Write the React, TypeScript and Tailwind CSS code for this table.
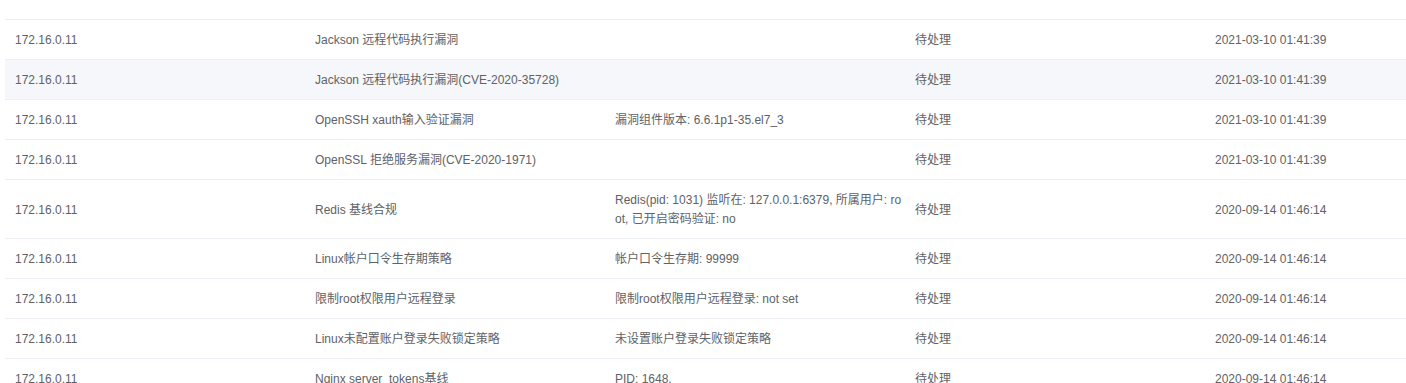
import React from "react";

type Row = {
  ip: string;
  name: string;
  detail: string;
  status: string;
  time: string;
};

const rows: Row[] = [
  { ip: "172.16.0.11", name: "Jackson 远程代码执行漏洞", detail: "", status: "待处理", time: "2021-03-10 01:41:39" },
  { ip: "172.16.0.11", name: "Jackson 远程代码执行漏洞(CVE-2020-35728)", detail: "", status: "待处理", time: "2021-03-10 01:41:39" },
  { ip: "172.16.0.11", name: "OpenSSH xauth输入验证漏洞", detail: "漏洞组件版本: 6.6.1p1-35.el7_3", status: "待处理", time: "2021-03-10 01:41:39" },
  { ip: "172.16.0.11", name: "OpenSSL 拒绝服务漏洞(CVE-2020-1971)", detail: "", status: "待处理", time: "2021-03-10 01:41:39" },
  {
    ip: "172.16.0.11",
    name: "Redis 基线合规",
    detail: "Redis(pid: 1031) 监听在: 127.0.0.1:6379, 所属用户: root, 已开启密码验证: no",
    status: "待处理",
    time: "2020-09-14 01:46:14",
  },
  { ip: "172.16.0.11", name: "Linux帐户口令生存期策略", detail: "帐户口令生存期: 99999", status: "待处理", time: "2020-09-14 01:46:14" },
  { ip: "172.16.0.11", name: "限制root权限用户远程登录", detail: "限制root权限用户远程登录: not set", status: "待处理", time: "2020-09-14 01:46:14" },
  { ip: "172.16.0.11", name: "Linux未配置账户登录失败锁定策略", detail: "未设置账户登录失败锁定策略", status: "待处理", time: "2020-09-14 01:46:14" },
  { ip: "172.16.0.11", name: "Nginx server_tokens基线", detail: "PID: 1648,", status: "待处理", time: "2020-09-14 01:46:14" },
];

function Cell({ children, tight }: { children?: React.ReactNode; tight?: boolean }) {
  return (
    <div
      className={`flex items-center pl-[10px] pt-[11px] pb-[9px] leading-[19px] break-all ${
        tight ? "pr-0" : "pr-[10px]"
      }`}
    >
      <span>{children}</span>
    </div>
  );
}

export default function App() {
  return (
    <div className="h-[383px] overflow-hidden bg-white pl-[5px] text-[12px] text-[#606266] font-['Liberation_Sans','Noto_Sans_CJK_SC',sans-serif]">
      {/* header is scrolled away, only its bottom line shows */}
      <div className="h-[20px] border-b border-[#ebeef5]" />
      {rows.map((r, i) => (
        <div
          key={i}
          className={`grid grid-cols-[300px_300px_300px_300px_1fr] border-b border-[#ebeef5] ${
            i === 1 ? "bg-[#f5f7fa]" : "bg-white"
          }`}
        >
          <Cell>{r.ip}</Cell>
          <Cell>{r.name}</Cell>
          <Cell tight>{r.detail}</Cell>
          <Cell>{r.status}</Cell>
          <Cell>{r.time}</Cell>
        </div>
      ))}
    </div>
  );
}
